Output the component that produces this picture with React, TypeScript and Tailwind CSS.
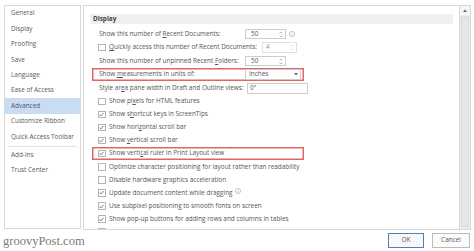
import React from "react";

const navItems = [
  "General",
  "Display",
  "Proofing",
  "Save",
  "Language",
  "Ease of Access",
  "Advanced",
  "Customize Ribbon",
  "Quick Access Toolbar",
];

const Check = ({ on }: { on?: boolean }) => (
  <span className="w-[7.5px] h-[7.5px] mr-[3.5px] border border-[#b4b4b4] bg-white flex items-center justify-center shrink-0">
    {on && (
      <svg width="5" height="5" viewBox="0 0 5 5">
        <path d="M0.5 2.6 L1.9 3.9 L4.5 0.9" stroke="#555" strokeWidth="0.8" fill="none" />
      </svg>
    )}
  </span>
);

const Info = () => (
  <svg width="6" height="6" viewBox="0 0 6 6" className="shrink-0">
    <circle cx="3" cy="3" r="2.6" stroke="#8aaad3" strokeWidth="0.6" fill="none" />
    <path d="M3 2.5 V4.5 M3 1.4 V1.9" stroke="#8aaad3" strokeWidth="0.6" />
  </svg>
);

const Arrows = ({ dim }: { dim?: boolean }) => (
  <svg width="4" height="7" viewBox="0 0 4 7">
    <path d="M0.5 2.3 L2 1 L3.5 2.3 M0.5 4.7 L2 6 L3.5 4.7" stroke={dim ? "#cccccc" : "#888"} strokeWidth="0.6" fill="none" />
  </svg>
);

const Spin = ({ value, dim }: { value: string; dim?: boolean }) =>
  dim ? (
    <div className="w-[35px] h-[10.5px] border border-[#e0e0e0] bg-white flex items-center justify-between pl-[3px] pr-[2px] text-[#909090]">
      <span>{value}</span>
      <Arrows dim />
    </div>
  ) : (
    <div className="w-[41px] h-[10px] border border-[#cccccc] bg-white flex items-center justify-between pl-[5px] pr-[2px]">
      <span>{value}</span>
      <Arrows />
    </div>
  );

const checks: { label: React.ReactNode; on: boolean; info?: boolean; red?: boolean }[] = [
  { label: <>Show pi<u>x</u>els for HTML features</>, on: false },
  { label: <>Show s<u>h</u>ortcut keys in ScreenTips</>, on: true },
  { label: <>Show hori<u>z</u>ontal scroll bar</>, on: true },
  { label: <>Show <u>v</u>ertical scroll bar</>, on: true },
  { label: <>Show verti<u>c</u>al ruler in Print Layout view</>, on: true, red: true },
  { label: <>Optimize character positioning for layout rather than readability</>, on: false },
  { label: <>Disable hardware graphics acceleration</>, on: false },
  { label: <>Update document content while dragging</>, on: true, info: true },
  { label: <>Use subpixel positioning to smooth fonts on screen</>, on: true },
  { label: <>Show pop-up buttons for adding rows and columns in tables</>, on: true },
  { label: <>Expand all headings when opening a document</>, on: false },
];

export default function App() {
  return (
    <div className="w-[474px] h-[251px] bg-white overflow-hidden font-['Open_Sans',sans-serif] text-[6.4px] leading-none text-[#555555]">
      <div className="flex gap-[2px] pt-[5px] pl-[4px]">
        {/* left nav */}
        <div className="w-[77px] h-[224px] border border-[#d8d8d8] bg-white flex flex-col text-[#5a5a5a]">
          {navItems.map((item) => (
            <div
              key={item}
              className={
                item === "Advanced"
                  ? "h-[15.4px] flex items-center pl-[6px] bg-[#c9dcf2] text-[#4a5668]"
                  : "h-[15.4px] flex items-center pl-[6px]"
              }
            >
              {item}
            </div>
          ))}
          <div className="mx-[3px] my-[1px] h-px bg-[#e4e4e4]" />
          <div className="h-[15.4px] flex items-center pl-[6px]">Add-ins</div>
          <div className="h-[15.4px] flex items-center pl-[6px]">Trust Center</div>
        </div>

        {/* right content */}
        <div className="w-[388px] h-[225px] border border-[#d8d8d8] bg-white flex">
          <div className="flex-1 overflow-hidden px-[6px] pt-[8px]">
            <div className="h-[10px] bg-[#efefef] flex items-center pl-[3px] font-bold text-[#444]">Display</div>
            <div className="h-[3.25px]" />

            <div className="h-[13.5px] flex items-center pl-[9px]">
              <span className="w-[146px]">
                Show this number of <u>R</u>ecent Documents:
              </span>
              <Spin value="50" />
              <span className="ml-[3px]">
                <Info />
              </span>
            </div>
            <div className="h-[13.5px] flex items-center pl-[8px]">
              <Check />
              <span className="w-[153px]">
                <u>Q</u>uickly access this number of Recent Documents:
              </span>
              <Spin value="4" dim />
            </div>
            <div className="h-[13.5px] flex items-center pl-[9px]">
              <span className="w-[146px]">
                Show this number of unpinned Recent <u>F</u>olders:
              </span>
              <Spin value="50" />
            </div>
            <div className="h-[13.5px] ml-[1.5px] w-[212px] flex items-center pl-[7.5px] ring-[1.5px] ring-inset ring-[#e06666]">
              <span className="w-[146px]">
                Show <u>m</u>easurements in units of:
              </span>
              <div className="w-[56px] h-[11px] border border-[#cccccc] bg-white flex items-center justify-between pl-[3px] pr-[2px]">
                <span>Inches</span>
                <svg width="4" height="3" viewBox="0 0 4 3">
                  <path d="M0 0 H4 L2 2.5 Z" fill="#666" />
                </svg>
              </div>
            </div>
            <div className="h-[13.5px] flex items-center pl-[9px]">
              <span className="w-[148px]">
                Style ar<u>e</u>a pane width in Draft and Outline views:
              </span>
              <div className="w-[61px] h-[11px] border border-[#cccccc] bg-white flex items-center pl-[2px]">0"</div>
            </div>

            {checks.map((c, i) => (
              <div
                key={i}
                className={
                  c.red
                    ? "h-[13.1px] ml-[1.5px] w-[212px] flex items-center pl-[6.5px] ring-[1.5px] ring-inset ring-[#e06666]"
                    : "h-[13.1px] flex items-center pl-[8px]"
                }
              >
                <Check on={c.on} />
                <span className="whitespace-nowrap">{c.label}</span>
                {c.info && (
                  <span className="ml-[2px] -mt-[4px]">
                    <Info />
                  </span>
                )}
              </div>
            ))}
          </div>

          {/* scrollbar */}
          <div className="w-[11px] border-l border-[#d8d8d8] bg-[#ededed] flex flex-col">
            <div className="h-[9px] bg-[#f5f5f5] flex items-center justify-center">
              <svg width="4" height="3" viewBox="0 0 4 3">
                <path d="M0 3 H4 L2 0.5 Z" fill="#666" />
              </svg>
            </div>
            <div className="flex-1 mx-[1px] mt-[1px] mb-[2px] bg-[#e6e6e6] border border-[#dcdcdc]" />
          </div>
        </div>
      </div>

      {/* bottom bar */}
      <div className="flex items-end justify-between pl-[3px] pr-[4px] mt-[3px]">
        <span className="font-['Liberation_Serif',serif] text-[12.5px] leading-none text-[#7a7a7a] mb-[1px]">groovyPost.com</span>
        <div className="flex gap-[8px]">
          <div className="w-[36px] h-[15px] border border-[#4a82bd] bg-[#f8f8f8] flex items-center justify-center text-[#555]">OK</div>
          <div className="w-[38px] h-[15px] border border-[#bcbcbc] bg-[#fbfbfb] flex items-center justify-center text-[#555]">Cancel</div>
        </div>
      </div>
    </div>
  );
}
